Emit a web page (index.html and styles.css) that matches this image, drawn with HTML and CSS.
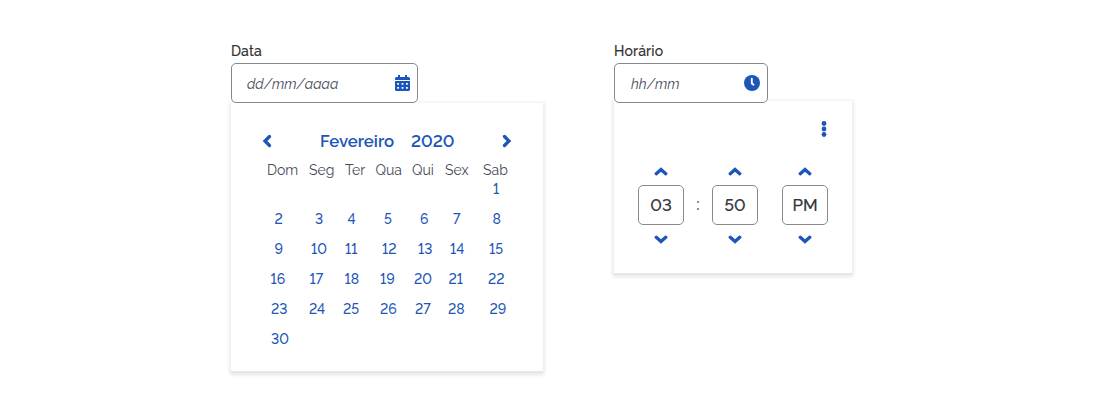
FILE: index.html
```html
<!DOCTYPE html>
<html lang="pt-BR">
<head>
<meta charset="utf-8">
<title>Data e horário</title>
<link rel="stylesheet" href="styles.css">
</head>
<body>
<svg width="0" height="0" class="defs">
  <symbol id="chevron" viewBox="0 0 12 8"><path d="M1.800 6 6 2.300 10.200 6" fill="none" stroke="currentColor" stroke-width="3" stroke-linecap="round" stroke-linejoin="miter"/></symbol>
</svg>
<main class="pickers">
  <section class="picker date">
    <label class="label" for="date">Data</label>
    <div class="field" id="date"><span class="hint">dd/mm/aaaa</span>
      <svg class="icon-cal" viewBox="0 0 15 16"><path fill="currentColor" fill-rule="evenodd" d="M3 0h2v2h5V0h2v2h1.500Q15 2 15 3.500V5H0V3.500Q0 2 1.500 2H3zM0 6h15v8.500q0 1.500-1.500 1.500h-12Q0 16 0 14.500zm2.200 2v1.800H4V8zm4.400 0v1.800h1.800V8zm4.400 0v1.800h1.800V8zM2.200 12v1.800H4V12zm4.400 0v1.800h1.800V12zm4.400 0v1.800h1.800V12z"/></svg>
    </div>
    <div class="panel calendar">
      <header class="month">
        <svg class="side prev" viewBox="0 0 10 14"><path d="M7.500 2.500 3 7l4.500 4.500"/></svg>
        <span class="name">Fevereiro</span><span class="year">2020</span>
        <svg class="side next" viewBox="0 0 10 14"><path d="M2.500 2.500 7 7l-4.500 4.500"/></svg>
      </header>
      <div class="row weekdays"><span>Dom</span><span>Seg</span><span>Ter</span><span>Qua</span><span>Qui</span><span>Sex</span><span>Sab</span></div>
      <div class="row first"><span>1</span></div>
      <div class="row second"><span>2</span><span>3</span><span>4</span><span>5</span><span>6</span><span>7</span><span>8</span></div>
      <div class="row third"><span>9</span><span>10</span><span>11</span><span>12</span><span>13</span><span>14</span><span>15</span></div>
      <div class="row fourth"><span>16</span><span>17</span><span>18</span><span>19</span><span>20</span><span>21</span><span>22</span></div>
      <div class="row fifth"><span>23</span><span>24</span><span>25</span><span>26</span><span>27</span><span>28</span><span>29</span></div>
      <div class="row last"><span>30</span></div>
    </div>
  </section>
  <section class="picker time">
    <label class="label" for="time">Horário</label>
    <div class="field" id="time"><span class="hint">hh/mm</span>
      <svg class="icon-clock" viewBox="0 0 16 16"><circle cx="8" cy="8" r="8" fill="currentColor"/><path d="M7.800 3.800v4.400l1.700 1.500" fill="none" stroke="#fff" stroke-width="1.900" stroke-linecap="round"/></svg>
    </div>
    <div class="panel clock">
      <svg class="more" viewBox="0 0 6 16"><g fill="currentColor"><circle cx="3" cy="2.500" r="2.400"/><circle cx="3" cy="8" r="2.400"/><circle cx="3" cy="13.500" r="2.400"/></g></svg>
      <div class="spinners">
        <div class="spinner"><svg class="up"><use href="#chevron"/></svg><div class="value">03</div><svg class="down"><use href="#chevron"/></svg></div>
        <span class="colon">:</span>
        <div class="spinner"><svg class="up"><use href="#chevron"/></svg><div class="value">50</div><svg class="down"><use href="#chevron"/></svg></div>
        <div class="spinner period"><svg class="up"><use href="#chevron"/></svg><div class="value">PM</div><svg class="down"><use href="#chevron"/></svg></div>
      </div>
    </div>
  </section>
</main>
</body>
</html>
```
FILE: styles.css
```css
* { box-sizing: border-box; }
body { margin: 0; min-height: 411px; background: #fff; color: #454b58; font-family: Raleway, Lato, sans-serif; font-size: 14px; font-variant-numeric: lining-nums; }
svg { display: block; flex: none; }
.defs { position: absolute; }
.pickers { display: flex; align-items: flex-start; padding: 41px 0 0 231px; }
.picker { display: flex; flex-direction: column; }
.date { width: 312px; margin-right: 71px; }
.time { width: 238px; }
.label { height: 22px; line-height: 20px; font-size: 14px; font-weight: 500; letter-spacing: .15px; color: #333; -webkit-text-stroke: .15px #333; }
.field { display: flex; align-items: center; justify-content: space-between; height: 40px; border: 1px solid #85878d; border-radius: 5px; background: #fff; padding: 0 7px 0 15px; z-index: 1; position: relative; }
.date .field { width: 187px; }
.time .field { width: 154px; padding: 0 7px 0 16px; }
.hint { font-style: italic; font-size: 14px; line-height: 20px; padding-top: 1px; }
.icon-cal { width: 15px; height: 16px; color: #1c56b8; }
.icon-clock { width: 16px; height: 16px; color: #1c56b8; }
.panel { background: #fff; box-shadow: 0 2px 0 #e6e6e6, 0 1px 3px 2px #eee, 0 4px 4px #e8e8e8; }
.calendar { height: 268px; padding-top: 27px; }
.month { display: flex; align-items: center; height: 22px; padding: 0 31px; color: #1c56b8; font-size: 16.800px; font-weight: 600; line-height: 22px; }
.side { width: 10px; height: 14px; fill: none; stroke: currentColor; stroke-width: 3.300; stroke-linecap: round; }
.name { width: 91px; margin-left: 48px; }
.year { width: 91px; }
.row { display: grid; justify-content: start; height: 30px; line-height: 30px; color: #1c56b8; font-weight: 500; white-space: nowrap; }
.weekdays { height: 20px; margin-top: 8px; line-height: 20px; color: #454b58; padding-left: 36px; font-weight: 400; grid-template-columns: 42px 36px 30.500px 36.500px 33px 38px 40px; }
.first { height: 18px; margin-bottom: 6px; line-height: 18px; padding-left: 262px; }
.second { padding-left: 43.500px; grid-template-columns: 40.500px 32.500px 36.500px 36px 33px 39.500px 20px; }
.third { padding-left: 43.500px; grid-template-columns: 36.500px 34px 37px 36px 32px 39px 20px; }
.fourth { padding-left: 39.500px; grid-template-columns: 39px 35px 35.500px 34px 34.500px 39.500px 20px; }
.fifth { padding-left: 40px; grid-template-columns: 38px 34px 37px 35px 33px 41.500px 20px; }
.last { padding-left: 40px; }
.clock { height: 172px; margin-top: -2px; display: flex; flex-direction: column; padding-top: 20px; }
.more { width: 6px; height: 16px; align-self: flex-end; margin-right: 25px; color: #1c56b8; }
.spinners { display: flex; padding: 30px 0 0 24px; }
.spinner { display: flex; flex-direction: column; align-items: center; width: 46px; }
.up, .down { width: 14px; height: 9px; color: #1c56b8; }
.down { transform: rotate(180deg); margin-top: 10px; }
.value { width: 46px; height: 40px; margin-top: 9px; line-height: 38px; border: 1px solid #888a90; border-radius: 5px; text-align: center; font-size: 16.800px; font-weight: 500; color: #33363e; -webkit-text-stroke: .15px #33363e; }
.colon { width: 28px; text-align: center; padding-top: 27px; line-height: 20px; font-size: 16.800px; font-weight: 500; }
.period { margin-left: 24px; }
```
